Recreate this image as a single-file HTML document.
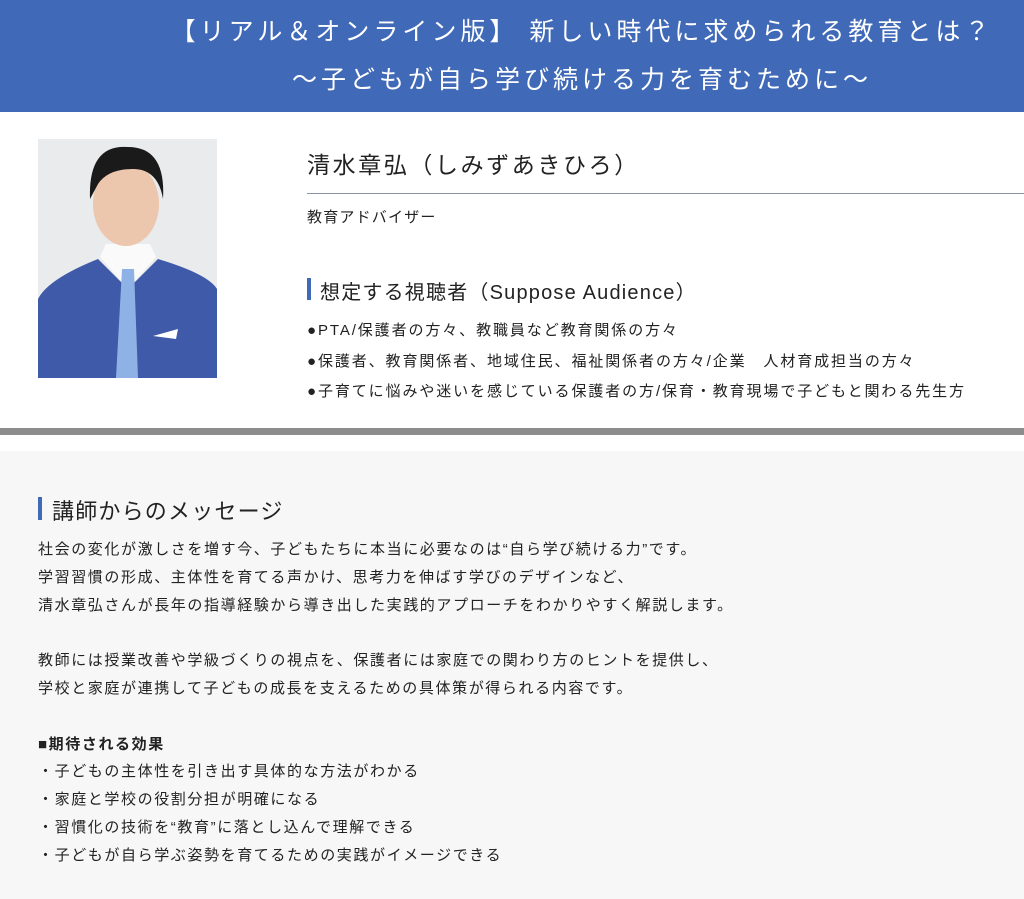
<!DOCTYPE html>
<html><head><meta charset="utf-8"><style>
*{margin:0;padding:0;box-sizing:border-box}
body{width:1024px;height:899px;overflow:hidden;background:#fff;font-family:"Liberation Sans","Noto Sans CJK JP",sans-serif;color:#222}
.hd{position:absolute;left:0;top:0;width:1024px;height:112px;background:#4069b7;color:#fff;font-size:25px;letter-spacing:4px}
.hd div{position:absolute;left:0;width:1164px;text-align:center}
.t{position:absolute;white-space:nowrap}
.bar{position:absolute;width:4px;background:#4069b7}
</style></head><body>
<div class="hd"><div style="top:12px">【リアル＆オンライン版】 新しい時代に求められる教育とは？</div><div style="top:60px">〜子どもが自ら学び続ける力を育むために〜</div></div>
<svg style="position:absolute;left:38px;top:139px" width="179" height="239" viewBox="0 0 179 239">
<rect width="179" height="239" fill="#e9ebed"/>
<path d="M0 160 Q10 140 60 120 L90 150 L120 120 Q170 135 179 150 L179 239 L0 239Z" fill="#3e5aa8"/>
<path d="M62 118 L90 150 L118 118 L112 105 L68 105Z" fill="#fafafa"/>
<path d="M84 130 L96 130 L100 239 L78 239Z" fill="#8fb2e6"/>
<ellipse cx="88" cy="65" rx="33" ry="42" fill="#ecc7ad"/>
<path d="M52 60 Q50 5 90 8 Q128 8 125 60 Q120 30 95 30 Q70 30 60 45 Z" fill="#1a1a1a"/>
<path d="M115 197 L140 190 L138 200Z" fill="#fff"/>
</svg>
<div class="t" style="left:307px;top:146px;font-size:23px;letter-spacing:2.6px">清水章弘（しみずあきひろ）</div>
<div style="position:absolute;left:307px;top:193px;width:717px;height:1px;background:#8a93a8"></div>
<div class="t" style="left:307px;top:206px;font-size:15px;letter-spacing:1.2px">教育アドバイザー</div>
<div class="bar" style="left:307px;top:278px;height:22px"></div>
<div class="t" style="left:320px;top:276px;font-size:20px;letter-spacing:1.2px">想定する視聴者（Suppose Audience）</div>
<div style="position:absolute;left:307px;top:316px;font-size:15px;line-height:30.5px;letter-spacing:1.9px;white-space:nowrap">●PTA/保護者の方々、教職員など教育関係の方々<br>●保護者、教育関係者、地域住民、福祉関係者の方々/企業　人材育成担当の方々<br>●子育てに悩みや迷いを感じている保護者の方/保育・教育現場で子どもと関わる先生方</div>
<div style="position:absolute;left:0;top:428px;width:1024px;height:7px;background:#8c8c8c"></div>
<div style="position:absolute;left:0;top:451px;width:1024px;height:448px;background:#f7f7f7"></div>
<div class="bar" style="left:38px;top:497px;height:23px"></div>
<div class="t" style="left:52px;top:494px;font-size:22px;letter-spacing:1.2px">講師からのメッセージ</div>
<div style="position:absolute;left:38px;top:536px;font-size:15px;line-height:27.8px;letter-spacing:1.6px;white-space:nowrap">
社会の変化が激しさを増す今、子どもたちに本当に必要なのは“自ら学び続ける力”です。<br>学習習慣の形成、主体性を育てる声かけ、思考力を伸ばす学びのデザインなど、<br>清水章弘さんが長年の指導経験から導き出した実践的アプローチをわかりやすく解説します。<br><br>教師には授業改善や学級づくりの視点を、保護者には家庭での関わり方のヒントを提供し、<br>学校と家庭が連携して子どもの成長を支えるための具体策が得られる内容です。<br><br><b>■期待される効果</b><br>・子どもの主体性を引き出す具体的な方法がわかる<br>・家庭と学校の役割分担が明確になる<br>・習慣化の技術を“教育”に落とし込んで理解できる<br>・子どもが自ら学ぶ姿勢を育てるための実践がイメージできる
</div>
</body></html>
